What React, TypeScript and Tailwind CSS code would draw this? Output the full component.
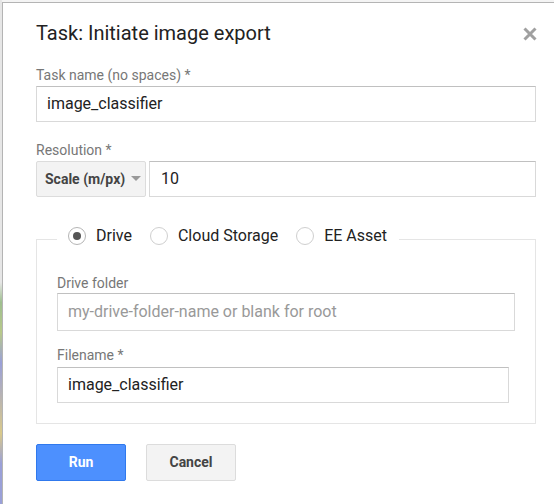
import React from "react";

function Radio({ checked, label }: { checked?: boolean; label: string }) {
  return (
    <label className="flex items-center">
      <span
        className={
          "flex h-[18px] w-[18px] items-center justify-center rounded-full border bg-white " +
          (checked ? "border-[#b5b5b5]" : "border-[#cfcfcf]")
        }
      >
        {checked && <span className="h-[8px] w-[8px] rounded-full bg-[#555]" />}
      </span>
      <span className="ml-[10px] text-[16px] leading-5 text-[#222]">{label}</span>
    </label>
  );
}

export default function App() {
  const font = { fontFamily: "Roboto, 'Liberation Sans', Arial, sans-serif" };
  return (
    <div className="flex h-[504px] w-[554px] overflow-hidden bg-[#f4f4f4]" style={font}>
      <div className="w-[2px] self-stretch bg-[linear-gradient(180deg,#e6e6e6_0%,#e6e6e6_56%,#9fbf8f_60%,#b8c98a_66%,#9aa0d8_72%,#d9c98a_86%,#9aa0d8_92%,#9aa0d8_100%)]" />
      <div className="mt-[2px] flex-1 border-l border-t border-[#b4b4b4] bg-white pl-[33px] pr-[18px] pt-[18px]">
        <div className="flex items-center justify-between">
          <h1 className="text-[20px] leading-6 text-[#222]">Task: Initiate image export</h1>
          <svg width="14" height="14" viewBox="0 0 14 14" className="mr-[-1px] mt-[1px]">
            <path d="M1.5 1.5 L12.5 12.5 M12.5 1.5 L1.5 12.5" stroke="#a0a0a0" strokeWidth="3" />
          </svg>
        </div>

        <div className="mt-[22px] text-[14px] leading-4 text-[#777]">Task name (no spaces) *</div>
        <div className="mt-[3px] flex h-[36px] items-center border border-[#d9d9d9] border-t-[#c0c0c0] px-[10px] text-[16px] text-[#222]">
          image_classifier
        </div>

        <div className="mt-[20px] text-[14px] leading-4 text-[#777]">Resolution *</div>
        <div className="mt-[3px] flex h-[36px] gap-[3px]">
          <div className="flex w-[110px] items-center rounded-[2px] border border-[#dcdcdc] bg-[#f3f3f3] pl-[8px] text-[14px] font-bold text-[#444]">
            Scale (m/px)
            <svg width="10" height="6" viewBox="0 0 10 6" className="ml-[6px]">
              <path d="M0 0 L10 0 L5 5 Z" fill="#999" />
            </svg>
          </div>
          <div className="flex flex-1 items-center border border-[#d9d9d9] border-t-[#c0c0c0] px-[11px] text-[16px] text-[#222]">
            10
          </div>
        </div>

        <fieldset className="mt-[29px] border border-[#e5e5e5] px-[20px] pb-[20px] pt-[23px]">
          <legend className="pb-[6px] pl-[11px] pr-[12px]">
            <div className="flex items-center gap-[18px]">
              <Radio checked label="Drive" />
              <Radio label="Cloud Storage" />
              <Radio label="EE Asset" />
            </div>
          </legend>
          <div className="text-[14px] leading-4 text-[#777]">Drive folder</div>
          <div className="mt-[2px] flex h-[38px] items-center border border-[#d9d9d9] border-t-[#c0c0c0] px-[10px] text-[16px] text-[#999]">
            my-drive-folder-name or blank for root
          </div>
          <div className="mt-[16px] text-[14px] leading-4 text-[#777]">Filename *</div>
          <div className="mt-[4px] flex h-[36px] w-[452px] items-center border border-[#d9d9d9] border-t-[#c0c0c0] px-[10px] text-[16px] text-[#222]">
            image_classifier
          </div>
        </fieldset>

        <div className="mt-[20px] flex gap-[20px]">
          <button className="flex h-[37px] w-[90px] items-center justify-center rounded-[2px] border border-[#3079ed] bg-[#4d90fe] text-[14px] font-bold text-white">
            Run
          </button>
          <button className="flex h-[37px] w-[90px] items-center justify-center rounded-[2px] border border-[#dcdcdc] bg-[#f3f3f3] text-[14px] font-bold text-[#444]">
            Cancel
          </button>
        </div>
      </div>
    </div>
  );
}
